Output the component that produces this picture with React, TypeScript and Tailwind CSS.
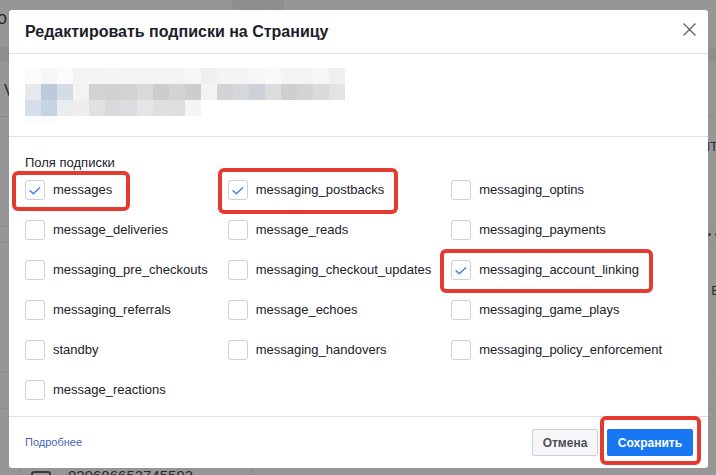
import React from 'react';

const pixelRows: string[][] = [
  ['#fbfbfb', '#f4f6f8', '#fbfbfb', '#f4f4f4', '#f4f4f4', '#f5f5f5', '#f4f4f4', '#f3f4f4', '#f4f4f4', '#f3f4f4', '#f6f6f6', '#efefef', '#f4f4f4', '#f4f4f4', '#f6f6f6', '#f9f9f9', '#f4f4f4', '#f4f4f4', '#f6f6f6', '#f0f0f0'],
  ['#e6e9ee', '#bccadb', '#d4dce6', '#f3f3f2', '#d2d2d2', '#d1d1d1', '#d4d2d0', '#d9d9db', '#cdcdcd', '#d4d4d4', '#cdcdce', '#f3f3f1', '#d1d3d6', '#d6d7d9', '#cdd2d8', '#dcdcdc', '#cfcfcf', '#d3d4d4', '#dadada', '#e3e3e3'],
  ['#d6dfe9', '#c6d3e3', '#e9edf2', '#eeeeee', '#e1e1e1', '#d8d9dc', '#dcdcde', '#e3e5e9', '#dfdfe1', '#dedee0', '#f5f5f5'],
];

interface Field {
  name: string;
  checked?: boolean;
}

// row by row, three columns
const fields: Field[] = [
  { name: 'messages', checked: true },
  { name: 'messaging_postbacks', checked: true },
  { name: 'messaging_optins' },
  { name: 'message_deliveries' },
  { name: 'message_reads' },
  { name: 'messaging_payments' },
  { name: 'messaging_pre_checkouts' },
  { name: 'messaging_checkout_updates' },
  { name: 'messaging_account_linking', checked: true },
  { name: 'messaging_referrals' },
  { name: 'message_echoes' },
  { name: 'messaging_game_plays' },
  { name: 'standby' },
  { name: 'messaging_handovers' },
  { name: 'messaging_policy_enforcement' },
  { name: 'message_reactions' },
];

const Checkbox = ({ checked }: { checked?: boolean }) => (
  <span className="flex h-[20px] w-[20px] shrink-0 items-center justify-center rounded-[3px] border border-[#ccd0d5] bg-white">
    {checked && (
      <svg width="20" height="20" viewBox="0 0 20 20" fill="none">
        <path d="M4.5 10.8 L8.2 14.2 L15.2 7.4" stroke="#3b7cf0" strokeWidth="1.5" strokeLinecap="round" strokeLinejoin="round" />
      </svg>
    )}
  </span>
);

export default function App() {
  return (
    <div className="relative h-[475px] w-[716px] overflow-hidden bg-[#969696] font-['Liberation_Sans',Arial,sans-serif]">
      {/* dimmed page behind the dialog */}
      <div className="flex h-full flex-col">
        <div className="flex h-[47px] items-start text-[#2a2a2a]">
          <span className="-ml-[3px] mt-[8px] text-[18px] leading-[20px]">о</span>
          <span className="ml-[225px] h-[10px] w-[52px] rounded-b-[4px] bg-[#8f8f8f]" />
        </div>
        <div className="h-[14px] bg-[#8e8e8e]" />
        <div className="flex h-[56px] items-center border-b border-[#8a8a8a] text-[#2a2a2a]">
          <span className="ml-[4px] mt-[4px] text-[16px]">V</span>
        </div>
        <div className="flex h-[110px] items-end justify-end border-b border-[#8c8c8c] pb-[70px] text-[13px] text-[#2a2a2a]">
          <span className="-mr-[2px]">IT</span>
        </div>
        <div className="flex h-[16px] items-center justify-end border-b border-[#8c8c8c]">
          <span className="mr-[2px] h-[3px] w-[3px] rounded-full bg-[#3a3a3a]" />
          <span className="-mr-[2px] ml-[2px] h-[3px] w-[3px] rounded-full bg-[#3a3a3a]" />
        </div>
        <div className="flex h-[130px] items-start justify-end border-b border-[#8c8c8c] pt-[38px] text-[13px] text-[#2a2a2a]">
          <span className="-mr-[4px]">В</span>
        </div>
        <div className="h-[36px] border-b border-[#8c8c8c]" />
        <div className="flex flex-1 items-end text-[15px] leading-[18px] text-[#2a2a2a]">
          <span className="ml-[20px] h-full border-l border-[#8a8a8a]" />
          <span className="ml-[10px] mb-[-8px] h-[12px] w-[20px] rounded-[3px] border-2 border-[#3a3a3a]" />
          <span className="ml-[17px] mb-[-10px]">829686653745593</span>
          <span className="ml-[58px] h-full border-l border-[#8a8a8a]" />
        </div>
      </div>

      {/* dialog */}
      <div className="absolute left-[9px] top-[10px] w-[699px] rounded-[3px] bg-white text-[#1d2129]">
        <div className="flex h-[44px] items-center justify-between border-b border-[#dddfe2] pl-[16px] pr-[12px]">
          <h2 className="text-[16px] font-bold leading-[20px]">Редактировать подписки на Страницу</h2>
          <svg className="-mt-[4px]" width="13" height="13" viewBox="0 0 13 13" fill="none">
            <path d="M0.5 0.5 L12.5 12.5 M12.5 0.5 L0.5 12.5" stroke="#606770" strokeWidth="1.4" />
          </svg>
        </div>

        <div className="h-[83px] border-b border-[#dddfe2] pl-[16px] pt-[14px]">
          {pixelRows.map((row, i) => (
            <div key={i} className="flex">
              {row.map((c, j) => (
                <span key={j} className="h-[16px] w-[16px]" style={{ backgroundColor: c }} />
              ))}
            </div>
          ))}
          <div className="flex">
            <span className="h-[6px] w-[16px] bg-[#fbfbfb]" />
            <span className="h-[6px] w-[16px] bg-[#fcfcfc]" />
          </div>
        </div>

        <div className="px-[16px] pb-[6px] pt-[19px]">
          <div className="h-[14px] text-[13px] leading-[14px]">Поля подписки</div>
          <div className="grid grid-cols-[auto_auto_auto] justify-start gap-x-[20px]">
            {fields.map((f) => (
              <label key={f.name} className="flex h-[40px] items-center gap-[8px] text-[13px]">
                <Checkbox checked={f.checked} />
                <span>{f.name}</span>
              </label>
            ))}
          </div>
        </div>

        <div className="flex h-[52px] items-center justify-between border-t border-[#dddfe2] pl-[16px] pr-[15px]">
          <a className="text-[11px] text-[#4267b2]">Подробнее</a>
          <div className="flex items-center gap-[9px]">
            <button className="h-[27px] w-[66px] rounded-[2px] border border-[#ccd0d5] bg-[#f5f6f7] text-[12px] font-bold text-[#4b4f56]">
              Отмена
            </button>
            <button className="h-[27px] w-[86px] rounded-[2px] bg-[#1877f2] text-[12px] font-bold text-white">
              Сохранить
            </button>
          </div>
        </div>
      </div>

      {/* red annotation frames */}
      <div className="pointer-events-none absolute left-[12px] top-[171px] h-[40px] w-[118px] rounded-[6px] border-4 border-[#e53a2f]" />
      <div className="pointer-events-none absolute left-[218px] top-[168px] h-[46px] w-[180px] rounded-[6px] border-4 border-[#e53a2f]" />
      <div className="pointer-events-none absolute left-[440px] top-[249px] h-[44px] w-[213px] rounded-[6px] border-4 border-[#e53a2f]" />
      <div className="pointer-events-none absolute left-[600px] top-[416px] h-[49px] w-[101px] rounded-[6px] border-4 border-[#e53a2f]" />
    </div>
  );
}
